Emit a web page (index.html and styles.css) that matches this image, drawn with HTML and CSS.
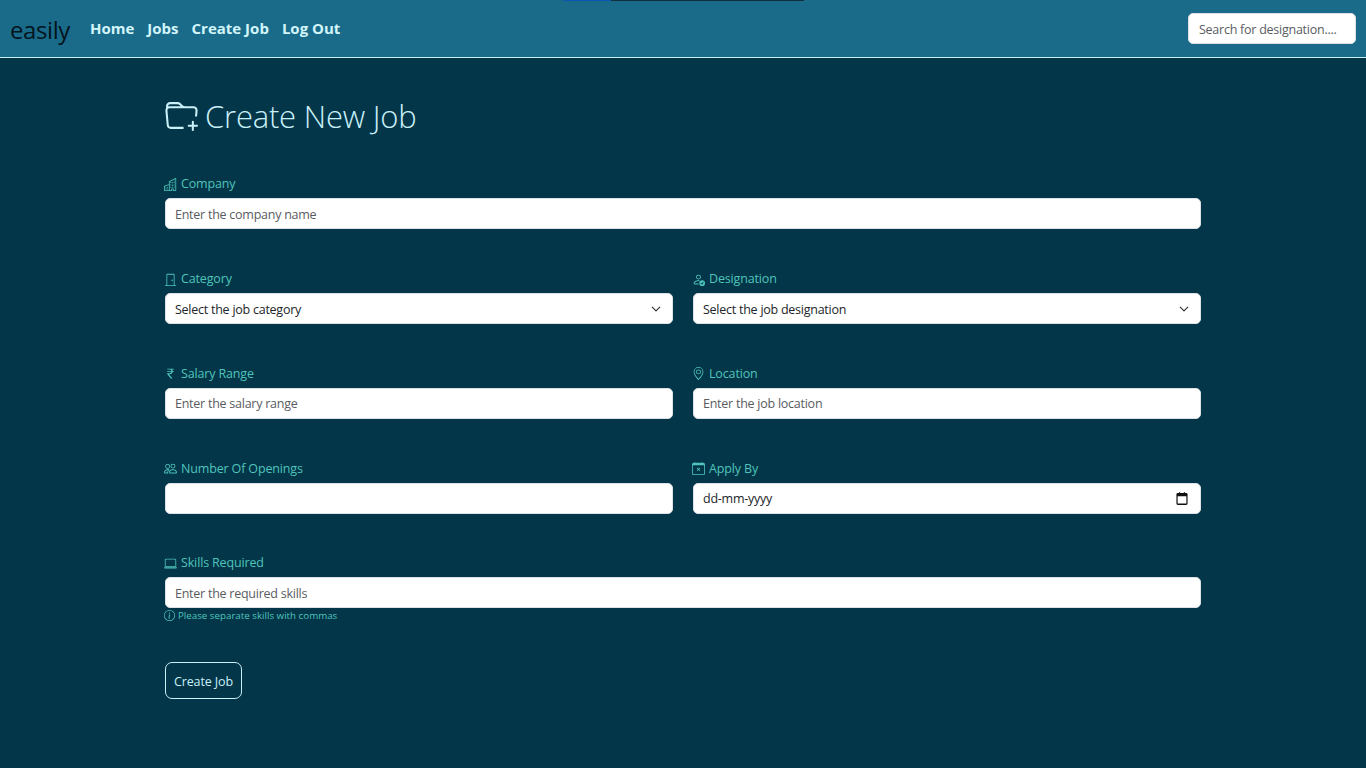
FILE: index.html
```html
<!DOCTYPE html>
<html lang="en-GB">
<head>
<meta charset="utf-8" />
<title>Create New Job</title>
<link rel="stylesheet" href="styles.css">
</head>
<body>
<div class="top-strip"><span class="strip-blue"></span><span class="strip-dark"></span></div>
<nav class="navbar">
    <a class="brand" href="#">easily</a>
    <ul class="nav-links">
        <li><a href="#">Home</a></li>
        <li><a href="#">Jobs</a></li>
        <li><a href="#">Create Job</a></li>
        <li><a href="#">Log Out</a></li>
    </ul>
    <input class="search" type="text" placeholder="Search for designation...." />
</nav>
<main class="page">
    <h1 class="title">
        <svg class="title-icon" viewBox="0 0 16 16" fill="currentColor"><path d="m.5 3 .04.87a1.99 1.99 0 0 0-.342 1.311l.637 7A2 2 0 0 0 2.826 14H9v-1H2.826a1 1 0 0 1-.995-.91l-.637-7A1 1 0 0 1 2.19 4h11.62a1 1 0 0 1 .996 1.09L14.54 8h1.005l.256-2.819A2 2 0 0 0 13.81 3H9.828a2 2 0 0 1-1.414-.586l-.828-.828A2 2 0 0 0 6.172 1H2.5a2 2 0 0 0-2 2zm5.672-1a1 1 0 0 1 .707.293L7.586 3H2.19c-.24 0-.47.042-.683.12L1.5 2.98a1 1 0 0 1 1-.98h3.672z"/><path d="M13.5 10a.5.5 0 0 1 .5.5V12h1.5a.5.5 0 1 1 0 1H14v1.5a.5.5 0 1 1-1 0V13h-1.5a.5.5 0 0 1 0-1H13v-1.5a.5.5 0 0 1 .5-.5z"/></svg>
        Create New Job
    </h1>
    <form class="job-form">
        <div class="field wide">
            <label><svg class="ico" viewBox="0 0 16 16" fill="currentColor"><path d="M14.763.075A.5.5 0 0 1 15 .5v15a.5.5 0 0 1-.5.5h-3a.5.5 0 0 1-.5-.5V14h-1v1.5a.5.5 0 0 1-.5.5h-9a.5.5 0 0 1-.5-.5V10a.5.5 0 0 1 .342-.474L6 7.64V4.5a.5.5 0 0 1 .276-.447l8-4a.5.5 0 0 1 .487.022ZM6 8.694 1 10.36V15h5V8.694ZM7 15h2v-1.5a.5.5 0 0 1 .5-.5h2a.5.5 0 0 1 .5.5V15h2V1.309l-7 3.5V15Z"/><path d="M2 11h1v1H2v-1Zm2 0h1v1H4v-1Zm-2 2h1v1H2v-1Zm2 0h1v1H4v-1Zm4-4h1v1H8V9Zm2 0h1v1h-1V9Zm-2 2h1v1H8v-1Zm2 0h1v1h-1v-1Zm2-2h1v1h-1V9Zm0 2h1v1h-1v-1ZM8 7h1v1H8V7Zm2 0h1v1h-1V7Zm2 0h1v1h-1V7ZM8 5h1v1H8V5Zm2 0h1v1h-1V5Zm2 0h1v1h-1V5Zm0-2h1v1h-1V3Z"/></svg> Company</label>
            <input class="control" type="text" placeholder="Enter the company name" />
        </div>
        <div class="field">
            <label><svg class="ico" viewBox="0 0 16 16" fill="currentColor"><path d="M3 2a1 1 0 0 1 1-1h8a1 1 0 0 1 1 1v13h1.5a.5.5 0 0 1 0 1h-13a.5.5 0 0 1 0-1H3V2zm1 13h8V2H4v13z"/><path d="M9 9a1 1 0 1 0 2 0 1 1 0 0 0-2 0z"/></svg> Category</label>
            <select class="control pick"><option>Select the job category</option></select>
        </div>
        <div class="field">
            <label><svg class="ico" viewBox="0 0 16 16" fill="currentColor"><path d="M12.5 16a3.5 3.5 0 1 0 0-7 3.5 3.5 0 0 0 0 7Zm1.679-4.493-1.335 2.226a.75.75 0 0 1-1.174.144l-.774-.773a.5.5 0 0 1 .708-.708l.547.548 1.17-1.951a.5.5 0 1 1 .858.514ZM11 5a3 3 0 1 1-6 0 3 3 0 0 1 6 0ZM8 7a2 2 0 1 0 0-4 2 2 0 0 0 0 4Z"/><path d="M8.256 14a4.474 4.474 0 0 1-.229-1.004H3c.001-.246.154-.986.832-1.664C4.484 10.68 5.711 10 8 10c.26 0 .507.009.74.025.226-.341.496-.65.804-.918C9.077 9.038 8.564 9 8 9c-5 0-6 3-6 4s1 1 1 1h5.256Z"/></svg> Designation</label>
            <select class="control pick"><option>Select the job designation</option></select>
        </div>
        <div class="field">
            <label><svg class="ico" viewBox="0 0 16 16" fill="currentColor"><path d="M4 3.06h2.726c1.22 0 2.12.575 2.325 1.724H4v1.051h5.051C8.855 7.001 8 7.558 6.788 7.558H4v1.317L8.437 14h2.11L6.095 8.884h.855c2.316-.018 3.465-1.476 3.688-3.049H12V4.784h-1.345c-.08-.778-.357-1.335-.793-1.732H12V2H4v1.06Z"/></svg> Salary Range</label>
            <input class="control" type="text" placeholder="Enter the salary range" />
        </div>
        <div class="field">
            <label><svg class="ico" viewBox="0 0 16 16" fill="currentColor"><path d="M12.166 8.94c-.524 1.062-1.234 2.12-1.96 3.07A31.493 31.493 0 0 1 8 14.58a31.481 31.481 0 0 1-2.206-2.57c-.726-.95-1.436-2.008-1.96-3.07C3.304 7.867 3 6.862 3 6a5 5 0 0 1 10 0c0 .862-.305 1.867-.834 2.94zM8 16s6-5.686 6-10A6 6 0 0 0 2 6c0 4.314 6 10 6 10z"/><path d="M8 8a2 2 0 1 1 0-4 2 2 0 0 1 0 4zm0 1a3 3 0 1 0 0-6 3 3 0 0 0 0 6z"/></svg> Location</label>
            <input class="control" type="text" placeholder="Enter the job location" />
        </div>
        <div class="field">
            <label><svg class="ico" viewBox="0 0 16 16" fill="currentColor"><path d="M15 14s1 0 1-1-1-4-5-4-5 3-5 4 1 1 1 1h8Zm-7.978-1A.261.261 0 0 1 7 12.996c.001-.264.167-1.03.76-1.72C8.312 10.629 9.282 10 11 10c1.717 0 2.687.63 3.24 1.276.593.69.758 1.457.76 1.72l-.008.002a.274.274 0 0 1-.014.002H7.022ZM11 7a2 2 0 1 0 0-4 2 2 0 0 0 0 4Zm3-2a3 3 0 1 1-6 0 3 3 0 0 1 6 0ZM6.936 9.28a5.88 5.88 0 0 0-1.23-.247A7.35 7.35 0 0 0 5 9c-4 0-5 3-5 4 0 .667.333 1 1 1h4.216A2.238 2.238 0 0 1 5 13c0-1.01.377-2.042 1.09-2.904.243-.294.526-.569.846-.816ZM4.92 10A5.493 5.493 0 0 0 4 13H1c0-.26.164-1.03.76-1.724.545-.636 1.492-1.256 3.16-1.275ZM1.5 5.5a3 3 0 1 1 6 0 3 3 0 0 1-6 0Zm3-2a2 2 0 1 0 0 4 2 2 0 0 0 0-4Z"/></svg> Number Of Openings</label>
            <input class="control" type="text" />
        </div>
        <div class="field">
            <label><svg class="ico" viewBox="0 0 16 16" fill="currentColor"><path d="M6.146 7.146a.5.5 0 0 1 .708 0L8 8.293l1.146-1.147a.5.5 0 1 1 .708.708L8.707 9l1.147 1.146a.5.5 0 0 1-.708.708L8 9.707l-1.146 1.147a.5.5 0 0 1-.708-.708L7.293 9 6.146 7.854a.5.5 0 0 1 0-.708z"/><path d="M3.5 0a.5.5 0 0 1 .5.5V1h8V.5a.5.5 0 0 1 1 0V1h1a2 2 0 0 1 2 2v11a2 2 0 0 1-2 2H2a2 2 0 0 1-2-2V3a2 2 0 0 1 2-2h1V.5a.5.5 0 0 1 .5-.5zM1 4v10a1 1 0 0 0 1 1h12a1 1 0 0 0 1-1V4H1z"/></svg> Apply By</label>
            <input class="control date-pick" type="text" value="dd-mm-yyyy" />
        </div>
        <div class="field wide">
            <label><svg class="ico" viewBox="0 0 16 16" fill="currentColor"><path d="M13.5 3a.5.5 0 0 1 .5.5V11H2V3.5a.5.5 0 0 1 .5-.5h11zm-11-1A1.5 1.5 0 0 0 1 3.5V12h14V3.5A1.5 1.5 0 0 0 13.5 2h-11zM0 12.5h16a1.5 1.5 0 0 1-1.5 1.5h-13A1.5 1.5 0 0 1 0 12.5z"/></svg> Skills Required</label>
            <input class="control" type="text" placeholder="Enter the required skills" />
            <small class="hint"><svg class="hint-icon" viewBox="0 0 16 16" fill="currentColor"><path d="M8 15A7 7 0 1 1 8 1a7 7 0 0 1 0 14zm0 1A8 8 0 1 0 8 0a8 8 0 0 0 0 16z"/><path d="m8.93 6.588-2.29.287-.082.38.45.083c.294.07.352.176.288.469l-.738 3.468c-.194.897.105 1.319.808 1.319.545 0 1.178-.252 1.465-.598l.088-.416c-.2.176-.492.246-.686.246-.275 0-.375-.193-.304-.533L8.93 6.588zM9 4.5a1 1 0 1 1-2 0 1 1 0 0 1 2 0z"/></svg> Please separate skills with commas</small>
        </div>
        <button class="submit" type="button">Create Job</button>
    </form>
</main>
</body>
</html>
```

FILE: styles.css
```css
*{box-sizing:border-box;}
body{margin:0;background:#023648;color:#caf0f8;font:13px/20px "Open Sans","Noto Sans",Arial,sans-serif;min-height:768px;}
ul{list-style-type:none;margin:0;padding:0;}
a{text-decoration:none;}

/* thin bar on the very top edge */
.top-strip{position:absolute;top:0;left:563px;display:flex;height:1px;}
.strip-blue{width:48px;background:#0a58b4;}
.strip-dark{width:193px;background:#12303c;}

.navbar{display:flex;align-items:center;height:58px;padding:0 10px;background:#1a6b8a;border-bottom:1px solid #caf0f8;}
.brand{color:#03141c;font-size:24px;letter-spacing:-.4px;margin-right:20px;margin-top:3px;}
.nav-links{display:flex;gap:13px;flex:1;}
.nav-links a{color:#d2f5fa;font-size:15px;font-weight:700;}
.search{width:168px;height:31px;border:1px solid #dee2e6;border-radius:5px;padding:1px 10px 0;font:12.5px "Open Sans",sans-serif;letter-spacing:-.25px;}
.search::placeholder{color:#595c5f;}

.page{width:1036px;margin:0 auto;padding-top:36px;}
.title{display:flex;align-items:center;gap:7px;margin:0 0 39.25px;font-size:31px;font-weight:300;line-height:44px;letter-spacing:-.2px;}
.title-icon{width:33px;height:33px;}

.job-form{display:grid;grid-template-columns:1fr 1fr;column-gap:20px;row-gap:42.75px;}
.field{display:flex;flex-direction:column;}
.wide{grid-column:1 / 3;}
.field label{display:flex;align-items:center;gap:4px;height:21px;margin-left:-1px;padding-bottom:7px;color:#50c4bc;font-size:12.5px;letter-spacing:-.15px;}
.ico{width:13px;height:13px;flex:none;}
.control{width:100%;height:31px;border:1px solid #dee2e6;border-radius:5px;background:#fff;padding:1px 9px 0;color:#212529;font:12.5px "Open Sans",sans-serif;letter-spacing:-.25px;}
.control::placeholder{color:#595c5f;}
.pick{appearance:none;background-image:url("data:image/svg+xml,%3csvg xmlns='http://www.w3.org/2000/svg' viewBox='0 0 16 16'%3e%3cpath fill='none' stroke='%23343a40' stroke-linecap='round' stroke-linejoin='round' stroke-width='2' d='m2 5 6 6 6-6'/%3e%3c/svg%3e");background-repeat:no-repeat;background-position:right 10px center;background-size:12px 10px;}
.date-pick{background-image:url("data:image/svg+xml,%3csvg xmlns='http://www.w3.org/2000/svg' viewBox='0 0 12 14'%3e%3cpath fill='%23111' d='M3 0h1v1h4V0h1v1h1.5A1.5 1.5 0 0 1 12 2.500v10a1.500 1.500 0 0 1-1.500 1.500h-9A1.500 1.500 0 0 1 0 12.500v-10A1.500 1.500 0 0 1 1.500 1H3zM1.300 4.500v8h9.400v-8z'/%3e%3c/svg%3e");background-repeat:no-repeat;background-position:right 12px center;background-size:12px 13px;}
.hint{display:flex;align-items:center;gap:3px;height:15px;color:#50c4bc;font-size:9.75px;margin-left:-1px;}
.hint-icon{width:11px;height:11px;}
.submit{grid-column:1 / 3;justify-self:start;width:77px;height:37px;margin-top:-4.25px;padding-top:3px;background:transparent;border:1px solid #caf0f8;border-radius:7px;color:#caf0f8;font:12.5px "Open Sans",sans-serif;letter-spacing:-.1px;}
```
